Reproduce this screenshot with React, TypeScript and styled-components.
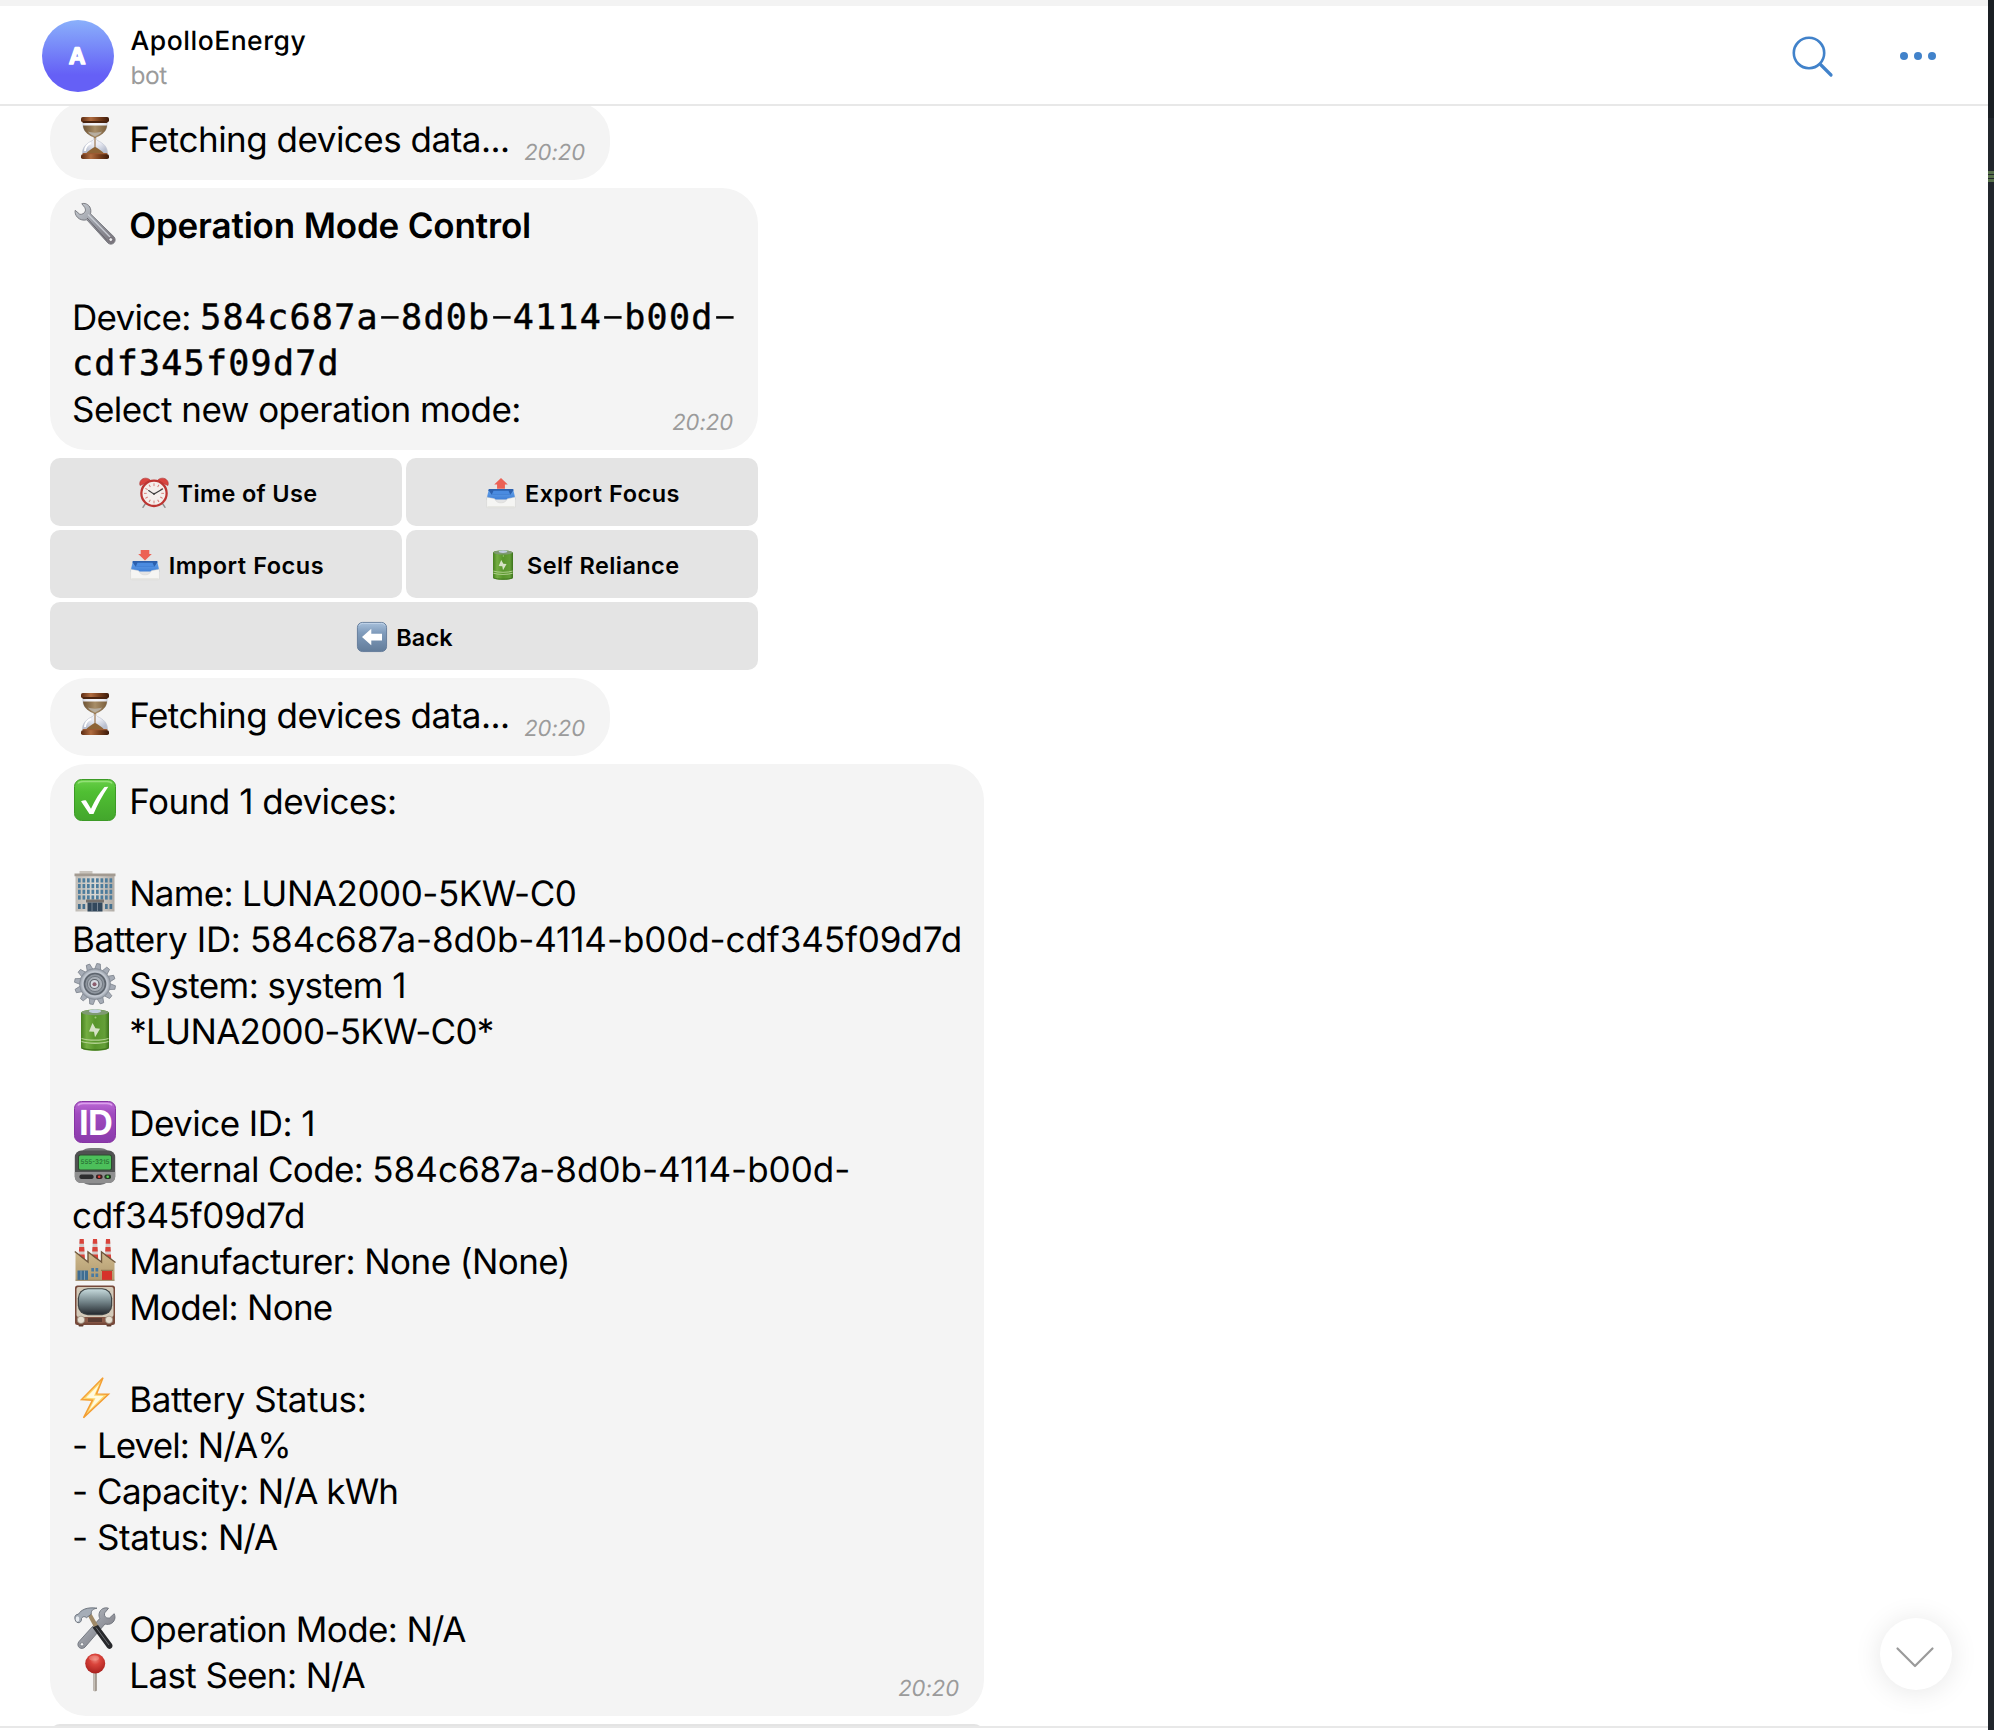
import React from "react";
import styled, { createGlobalStyle } from "styled-components";

const GlobalStyle = createGlobalStyle`
  *, *::before, *::after { box-sizing: border-box; }
  html, body { margin: 0; height: 100%; background: #ffffff; overflow: hidden; }
  body {
    font-family: Inter, "Noto Sans", "Liberation Sans", sans-serif;
    color: #000000;
    text-rendering: geometricPrecision;
    -webkit-font-smoothing: antialiased;
  }
`;

/* ---------- window ---------- */

const Window = styled.div`
  display: flex;
  width: 1994px;
  height: 1730px;
`;

const Pane = styled.div`
  flex: 1;
  min-width: 0;
  display: flex;
  flex-direction: column;
  border-top: 6px solid #f3f3f3;
  position: relative;
`;

const EditorEdge = styled.aside`
  width: 6px;
  display: flex;
  flex-direction: column;
  background: #21262c;
`;

const EditorTab = styled.div`
  height: 118px;
  margin-bottom: 53px;
  background: #1a1f24;
`;

const CodeMark = styled.div`
  height: 3px;
  margin-bottom: 1px;
  background: #56704a;
`;

/* ---------- header ---------- */

const Header = styled.header`
  height: 100px;
  padding: 14px 52px 0 42px;
  border-bottom: 2px solid #e8e8e8;
  display: flex;
  align-items: flex-start;
`;

const Avatar = styled.div`
  width: 72px;
  height: 72px;
  border-radius: 50%;
  background: linear-gradient(180deg, #8ab0fb 0%, #6560f6 76%, #6560f6 100%);
  overflow: hidden;
`;

const Peer = styled.div`
  flex: 1;
  padding: 5px 0 0 16.5px;
`;

const PeerName = styled.div`
  font-size: 26.5px;
  font-weight: 500;
  line-height: 33px;
  letter-spacing: 0.52px;
`;

const PeerStatus = styled.div`
  font-size: 24.5px;
  line-height: 34px;
  letter-spacing: -0.5px;
  color: #9b9b9b;
`;

const HeaderActions = styled.div`
  display: flex;
  align-items: center;
  height: 72px;
  gap: 66px;
`;

/* ---------- messages ---------- */

const Feed = styled.main`
  height: 1620px;
  padding-left: 50px;
  display: flex;
  flex-direction: column;
  align-items: flex-start;
  gap: 8px;
  overflow: hidden;
`;

const Bubble = styled.section<{ $width: number; $clipped?: boolean }>`
  flex: none;
  width: ${(p) => p.$width}px;
  margin-top: ${(p) => (p.$clipped ? -4 : 0)}px;
  padding: 16px 25px 16px 22px;
  border-radius: 36px;
  background: #f4f4f4;
`;

const Line = styled.div`
  display: flex;
  align-items: flex-start;
  height: 46px;
  white-space: pre;
`;

const Glyph = styled.span`
  flex: none;
  width: 57.2px;
  height: 42px;
  margin-top: -1px;
  padding-left: 2px;
`;

const Copy = styled.span<{ $track?: number; $bold?: boolean }>`
  font-size: 35px;
  line-height: 44px;
  font-weight: ${(p) => (p.$bold ? 600 : 400)};
  letter-spacing: ${(p) => p.$track ?? -0.5}px;
`;

const Code = styled.code<{ $indent: number }>`
  margin-left: ${(p) => p.$indent}px;
  font-family: "DejaVu Sans Mono", "Liberation Mono", monospace;
  font-size: 35px;
  line-height: 44px;
  letter-spacing: 1.25px;
  -webkit-text-stroke: 0.5px #000000;
`;

/* One monospace cell holding a hyphen stretched to nearly the cell's width. */
const Dash = styled.span`
  display: inline-flex;
  justify-content: center;
  width: 22.3px;
  font-family: Roboto, sans-serif;
  line-height: 30px;
  letter-spacing: 0;
  -webkit-text-stroke: 0;
`;

const DashInk = styled.span`
  transform: translateY(-1px) scaleX(2.1);
`;

const Time = styled.time`
  margin: 24px 0 0 auto;
  font-size: 22px;
  line-height: 22px;
  font-style: italic;
  letter-spacing: -0.02px;
  color: #9b9b9b;
`;

/* ---------- inline keyboard ---------- */

const Keyboard = styled.div`
  flex: none;
  width: 708px;
  display: grid;
  grid-template-columns: 1fr 1fr;
  gap: 4px;
`;

const Key = styled.button<{ $wide?: boolean; $track: number; $lead?: number }>`
  grid-column: ${(p) => (p.$wide ? "1 / -1" : "auto")};
  height: 68px;
  padding: 2px 0 0 ${(p) => p.$lead ?? 2}px;
  border: 0;
  border-radius: 10px;
  background: #e4e4e4;
  display: flex;
  align-items: center;
  justify-content: center;
  gap: 9px;
  font-family: inherit;
  font-size: 23.5px;
  font-weight: 600;
  line-height: 30px;
  letter-spacing: ${(p) => p.$track}px;
  color: #000000;
`;

const KeyLabel = styled.span`
  padding-top: 2px;
`;

const NextKey = styled.div`
  flex: none;
  width: 934px;
  height: 68px;
  border-radius: 10px;
  background: #e4e4e4;
`;

const Footer = styled.footer`
  height: 4px;
  border-top: 2px solid #e8e8e8;
  background: #ffffff;
`;

const JumpDown = styled.button`
  position: absolute;
  right: 36px;
  bottom: 40px;
  width: 72px;
  height: 72px;
  padding: 0;
  border: 0;
  border-radius: 50%;
  background: #ffffff;
  box-shadow: 0 2px 28px rgba(0, 0, 0, 0.1);
`;

/* ---------- emoji drawings ---------- */

type EmojiProps = { size?: number };

const EmojiSvg = styled.svg`
  display: block;
  overflow: visible;
`;

const DefsSvg = styled.svg`
  position: absolute;
`;

const Emoji = ({ size = 42, children }: EmojiProps & { children: React.ReactNode }) => (
  <EmojiSvg width={size} height={size} viewBox="0 0 42 42">
    {children}
  </EmojiSvg>
);

const Defs = () => (
  <DefsSvg width="0" height="0">
    <defs>
      <linearGradient id="wood" x1="0" x2="1">
        <stop offset="0" stopColor="#5b2b12" />
        <stop offset=".35" stopColor="#b06c40" />
        <stop offset=".65" stopColor="#7a401d" />
        <stop offset="1" stopColor="#3c1a0a" />
      </linearGradient>
      <linearGradient id="sand" x1="0" x2="1">
        <stop offset="0" stopColor="#6e5334" />
        <stop offset=".5" stopColor="#a88e68" />
        <stop offset="1" stopColor="#7b5f3d" />
      </linearGradient>
      <radialGradient id="glass" cx=".5" cy=".3" r=".7">
        <stop offset="0" stopColor="#ffffff" />
        <stop offset=".6" stopColor="#e9ebf3" />
        <stop offset="1" stopColor="#b9bfcf" />
      </radialGradient>
      <linearGradient id="steel" x1="0" y1="0" x2="1" y2="1">
        <stop offset="0" stopColor="#c9ced4" />
        <stop offset=".5" stopColor="#9598a0" />
        <stop offset="1" stopColor="#777178" />
      </linearGradient>
      <linearGradient id="green" x1="0" y1="0" x2="0" y2="1">
        <stop offset="0" stopColor="#68cf48" />
        <stop offset=".3" stopColor="#50bf33" />
        <stop offset="1" stopColor="#43a62c" />
      </linearGradient>
      <linearGradient id="purple" x1="0" y1="0" x2="0" y2="1">
        <stop offset="0" stopColor="#bd6bd6" />
        <stop offset=".3" stopColor="#a04abf" />
        <stop offset="1" stopColor="#8a3aab" />
      </linearGradient>
      <linearGradient id="slate" x1="0" y1="0" x2="0" y2="1">
        <stop offset="0" stopColor="#a9c1dc" />
        <stop offset=".35" stopColor="#809cbc" />
        <stop offset="1" stopColor="#627c9a" />
      </linearGradient>
      <linearGradient id="cell" x1="0" x2="1">
        <stop offset="0" stopColor="#47801f" />
        <stop offset=".2" stopColor="#74ae42" />
        <stop offset=".5" stopColor="#58952b" />
        <stop offset=".85" stopColor="#649f38" />
        <stop offset="1" stopColor="#3b721b" />
      </linearGradient>
      <linearGradient id="wall" x1="0" x2="1">
        <stop offset="0" stopColor="#c0bcb6" />
        <stop offset=".5" stopColor="#dcd9d4" />
        <stop offset="1" stopColor="#b0aba5" />
      </linearGradient>
      <radialGradient id="gear" cx=".5" cy=".5" r=".5">
        <stop offset="0" stopColor="#8b9198" />
        <stop offset=".55" stopColor="#a2a9b2" />
        <stop offset=".8" stopColor="#c3c9d2" />
        <stop offset="1" stopColor="#8d949e" />
      </radialGradient>
      <linearGradient id="screen" x1="0" y1="0" x2="0" y2="1">
        <stop offset="0" stopColor="#c4d8da" />
        <stop offset=".5" stopColor="#74858a" />
        <stop offset="1" stopColor="#262c31" />
      </linearGradient>
      <linearGradient id="bolt" x1="0" y1="0" x2="1" y2="1">
        <stop offset="0" stopColor="#f6a93b" />
        <stop offset="1" stopColor="#f0932b" />
      </linearGradient>
      <radialGradient id="ball" cx=".5" cy=".3" r=".65">
        <stop offset="0" stopColor="#f0867a" />
        <stop offset=".4" stopColor="#d9433b" />
        <stop offset="1" stopColor="#ad2421" />
      </radialGradient>
      <linearGradient id="trayIn" x1="0" y1="0" x2="0" y2="1">
        <stop offset="0" stopColor="#6aa8ef" />
        <stop offset="1" stopColor="#3f7fd6" />
      </linearGradient>
      <linearGradient id="brick" x1="0" y1="0" x2="0" y2="1">
        <stop offset="0" stopColor="#ceb88b" />
        <stop offset="1" stopColor="#b09a70" />
      </linearGradient>
    </defs>
  </DefsSvg>
);

const Hourglass = () => (
  <Emoji>
    <path d="M9 5h24c1 8-4 12-9.500 14.500c-1.500.8-1.500 3.200 0 4C29 26 34 30 33.500 37h-25C8 30 13 26 18.500 23.500c1.500-.8 1.500-3.200 0-4C13 17 8 13 9 5z" fill="url(#glass)" stroke="#c3c7d2" strokeWidth=".7" />
    <path d="M9 8.500h24c-.3 5.500-4.500 9-9.500 11.300c-1 .4-1.800 1.200-2.500 1.700c-.7-.5-1.500-1.300-2.500-1.700C13.500 17.500 9.300 14 9 8.500z" fill="url(#sand)" />
    <path d="M14 14.500c4 1.500 10 1.500 14 0c-1 2.500-4.500 3.800-7 5c-2.500-1.200-6-2.500-7-5z" fill="#bdb8b0" opacity=".8" />
    <path d="M20.500 20h1v10c3 2 7 4 9 7h-19c2-3 6-5 9-7z" fill="#8d6335" />
    <path d="M11 34c0-4 3-7 6-8" fill="none" stroke="#ffffff" strokeWidth="2" />
    <rect x="7" y="0" width="28" height="5.300" rx="1.800" fill="url(#wood)" />
    <rect x="8.500" y="4" width="25" height="2" rx="1" fill="#4a2410" />
    <rect x="8.500" y="36" width="25" height="2" rx="1" fill="#9b5a32" />
    <rect x="7" y="37.300" width="28" height="4.700" rx="1.800" fill="url(#wood)" />
  </Emoji>
);

const Wrench = () => (
  <Emoji>
    <path
      d="M7.800.7C10.500-.2 14 1 15.800 4c1.300 2.300 1.200 4.600.7 6.800L40 33.800c1.500 1.700 1.600 4.300 0 6c-1.600 1.700-4.200 1.800-6 .3L12.800 16.800C9.500 17.600 6 17 3.500 14.400C1.500 12.300.7 9.700 1.200 7.300l4.600 4c1.900.4 4.800-.8 5.600-3.400c.3-1.200-.1-2.500-.6-3.300z"
      fill="url(#steel)" stroke="#74757c" strokeWidth=".9" strokeLinejoin="round"
    />
    <path d="M14 11.500L36 34" stroke="#c9ccd3" strokeWidth="1.300" fill="none" />
    <path d="M13 15L33 37.500" stroke="#67646c" strokeWidth="1" fill="none" />
    <circle cx="36.800" cy="36.600" r="1.900" fill="#ededee" stroke="#66606a" strokeWidth=".8" />
  </Emoji>
);

const AlarmClock = ({ size }: EmojiProps) => (
  <Emoji size={size}>
    <path d="M9 36l-3.500 5M33 36l3.500 5" stroke="#8c8c8c" strokeWidth="2" strokeLinecap="round" />
    <path d="M1.500 10.500C-.5 5 4 .2 9 .2c3.500 0 6 1.300 7.500 3.800z" fill="#d9443f" stroke="#a92b2a" strokeWidth=".8" />
    <path d="M40.500 10.500C42.500 5 38 .2 33 .2c-3.500 0-6 1.300-7.500 3.800z" fill="#d9443f" stroke="#a92b2a" strokeWidth=".8" />
    <circle cx="21" cy="21.500" r="17.700" fill="#f4efec" stroke="#bd3532" strokeWidth="3.200" />
    <g stroke="#d77873" strokeWidth="1.300">
      {Array.from({ length: 12 }, (_, i) => (
        <path key={i} d="M21 7.500v3.800" transform={`rotate(${i * 30} 21 21.500)`} />
      ))}
    </g>
    <path d="M13.500 17.500L21 22.500L33 15.500" fill="none" stroke="#3b3b3b" strokeWidth="1.500" strokeLinecap="round" />
    <circle cx="21" cy="22" r="1.400" fill="#3b3b3b" />
  </Emoji>
);

const Tray = ({ size, down }: EmojiProps & { down?: boolean }) => (
  <Emoji size={size}>
    <path d={down ? "M15 0h12v5.500h3.500L21 14.800L11.500 5.500H15z" : "M21 0l9.500 9h-4v6h-11V9h-4z"} fill="#ec6154" />
    <path d="M4 15.300h34l3.300 14.700H.7z" fill="url(#trayIn)" />
    <path d="M4 15.300h34l.5 1.700l-4.500 6.500h-26L3.500 17z" fill="#2c60ad" />
    <path d="M8 23.500L10.500 18h21l2.500 5.500z" fill="#4a8be0" />
    <path d="M.8 26.500c4 1.500 8 1.500 11.200 2.500c2 4.500 5.500 5.800 9 5.800s7-1.300 9-5.800c3.200-1 7.200-1 11.200-2.500v14c0 .7-.4 1-1 1H1.800c-.6 0-1-.3-1-1z" fill="#f5f5f3" stroke="#d0d0cf" strokeWidth=".7" />
    <path d="M2 40h38" stroke="#deded9" strokeWidth="1" />
  </Emoji>
);

const Battery = ({ size }: EmojiProps) => (
  <Emoji size={size}>
    <path d="M7 4c0-2 6.300-3.500 14-3.500S35 2 35 4v34.500c0 2-6.300 3.300-14 3.300S7 40.500 7 38.500z" fill="url(#cell)" />
    <ellipse cx="21" cy="3.500" rx="13.300" ry="2.800" fill="#7f9a72" />
    <ellipse cx="21" cy="2.200" rx="6" ry="1.900" fill="#c3cee2" />
    <path d="M18.500 14l-3.500 8.500l5 .2l1 5.500l5-8.500l-4.500-.5z" fill="#d6e2c6" />
    <circle cx="21.500" cy="8.500" r="1" fill="#9dc67a" />
    <path d="M7.500 29.500c7 2.300 20 2.300 27 0M7.500 32.500c7 2.300 20 2.300 27 0" fill="none" stroke="#b4d292" strokeWidth="1.300" />
    <path d="M7.500 39c6 2.500 21 2.500 27 0" fill="none" stroke="#3f751d" strokeWidth="1.300" />
  </Emoji>
);

const BackArrow = ({ size }: EmojiProps) => (
  <Emoji size={size}>
    <rect x=".6" y=".6" width="40.800" height="40.800" rx="7" fill="url(#slate)" stroke="#5c7696" strokeWidth="1.200" />
    <path d="M3 5c1-2.500 3-3 6-3h24c3 0 5 .5 6 3" fill="none" stroke="#c5d6ea" strokeWidth="1.200" />
    <path d="M7 21L20 9.500v7h15v9.500H20v6.500z" fill="#ffffff" />
  </Emoji>
);

const Check = () => (
  <Emoji>
    <rect x=".5" y=".5" width="41" height="41" rx="7" fill="url(#green)" stroke="#3c9a26" />
    <path d="M4 4.500C5 2.700 7 2.500 9 2.500h24c2 0 4 .2 5 2" fill="none" stroke="#93e077" strokeWidth="1.400" />
    <path d="M7 22.300c2-.8 3.800-1.300 5-.8l5 8.300c4-8.800 8.500-15.800 13.500-21.800l3.800-.2C28.500 16.500 23.500 25.500 19.500 35h-4z" fill="#ffffff" />
  </Emoji>
);

const Building = () => (
  <Emoji>
    <rect x="5.500" y="0" width="13" height="4" fill="#c9c4bd" />
    <rect x="1.500" y="4" width="39" height="36.500" fill="url(#wall)" />
    <path d="M.5 2.500h41v2.700h-41z" fill="#a39b92" />
    {[7.3, 13, 18.7, 24.4].map((y) =>
      Array.from({ length: 8 }, (_, i) => (
        <rect key={`${y}-${i}`} x={4 + i * 4.5} y={y} width="2.700" height="4.200" fill="#4d7c9c" />
      ))
    )}
    {[4, 8.5, 31, 35.5].map((x) => (
      <rect key={x} x={x} y="33" width="2.700" height="5" fill="#446f8e" />
    ))}
    <path d="M12 28.500h18v3H12z" fill="#77726e" />
    <path d="M13.500 31.500h15v9h-15z" fill="#32485c" />
    <path d="M18 31.500v9M23.500 31.500v9" stroke="#8b98a3" strokeWidth=".8" />
  </Emoji>
);

const Gear = () => (
  <Emoji>
    {Array.from({ length: 12 }, (_, i) => (
      <path key={i} d="M18 7l1.200-6.500h3.600L24.200 7z" fill="#a6acb6" stroke="#757c86" strokeWidth=".7" transform={`rotate(${i * 30 + 10} 21 21)`} />
    ))}
    <circle cx="21" cy="21" r="15.500" fill="url(#gear)" stroke="#858c96" strokeWidth=".7" />
    <circle cx="21" cy="21" r="10.500" fill="#8f969f" stroke="#5d646d" strokeWidth="1.600" />
    <circle cx="21" cy="21" r="7.600" fill="#a9afb7" stroke="#737a83" strokeWidth="1" />
    <circle cx="20.500" cy="21" r="4.500" fill="#d7dbe2" stroke="#5b6169" strokeWidth="1.200" />
    <circle cx="20.500" cy="21.200" r="2" fill="#8b5d6d" />
  </Emoji>
);

const IdBadge = () => (
  <Emoji>
    <rect x=".5" y=".5" width="41" height="41" rx="7" fill="url(#purple)" stroke="#8734a4" />
    <path d="M4 4.500C5 2.700 7 2.500 9 2.500h24c2 0 4 .2 5 2" fill="none" stroke="#dba0ec" strokeWidth="1.400" />
    <text x="21.600" y="34" textAnchor="middle" fontFamily="Inter, sans-serif" fontWeight="700" fontSize="34.500" letterSpacing="-0.6" fill="#ffffff">ID</text>
  </Emoji>
);

const Pager = () => (
  <Emoji>
    <path d="M8 4c2-2 5-3 9-3h8c4 0 7 1 9 3l-2 32c-2 1.500-5 2-8 2h-6c-3 0-6-.5-8-2z" fill="#77787a" />
    <rect x=".8" y="3.500" width="40.400" height="32.500" rx="6.500" fill="#505152" />
    <path d="M.8 25h40.400v4.500c0 4-2.500 6.500-6.500 6.500H7.300c-4 0-6.500-2.500-6.500-6.500z" fill="#8f8f90" />
    <rect x="4" y="7.500" width="34" height="16" rx="2.500" fill="#2f4a30" />
    <rect x="5" y="8.500" width="32" height="14" rx="1.500" fill="#4cc05a" />
    <text x="21" y="17" textAnchor="middle" fontFamily="Inter, sans-serif" fontWeight="500" fontSize="6.300" fill="#246b30">555-3215</text>
    <rect x="5.500" y="27.500" width="14" height="4.500" rx="1.800" fill="#2d2d2e" />
    <rect x="22" y="27.500" width="6.500" height="4.500" rx="1.800" fill="#3a2222" />
    <rect x="30.500" y="27.500" width="6.500" height="4.500" rx="1.800" fill="#233a23" />
    <circle cx="25.200" cy="29.700" r="1.300" fill="#e5433b" />
    <circle cx="33.700" cy="29.700" r="1.300" fill="#5cd15b" />
  </Emoji>
);

const Factory = () => (
  <Emoji>
    {[7.7, 21, 34].map((x) => (
      <g key={x}>
        <path d={`M${x - 2} 0h4l1.300 22h-6.600z`} fill="#d3cac8" />
        <path d={`M${x - 2} 0h4l.3 4.800h-4.600zM${x - 2.5} 8h5l.3 4.500h-5.600zM${x - 2.9} 15.500h5.800l.3 5h-6.400z`} fill="#d9433a" />
      </g>
    ))}
    <path d="M1.500 13.500l12.500 10V13.500l13 10V13.500l13.500 9.500v18.500h-39z" fill="url(#brick)" />
    <path d="M.8 12.500L14 23V13L27.500 23V13L41.500 23.500" fill="none" stroke="#6f573b" strokeWidth="1.400" />
    <path d="M3.500 31.500h10.500v9.500H3.500z" fill="#3f6d92" />
    <path d="M7 31.500v9.500M10.500 31.500v9.500" stroke="#9fb3c0" strokeWidth=".7" />
    <path d="M17.300 29h2.700v3.500h-2.700zM21.500 29h2.700v3.500h-2.700zM17.300 34.500h2.700v3.500h-2.700zM21.500 34.500h2.700v3.500h-2.700z" fill="#497ba3" />
    <path d="M28 32h10v9H28z" fill="#d6332b" />
    <path d="M27 31.300h12" stroke="#8c6f4b" strokeWidth="1" />
    <path d="M1.500 41.300h39" stroke="#8b7650" strokeWidth=".8" />
  </Emoji>
);

const Television = () => (
  <Emoji>
    <rect x="4.500" y="37" width="5" height="4.500" rx="1" fill="#5b3a2d" />
    <rect x="32.500" y="37" width="5" height="4.500" rx="1" fill="#5b3a2d" />
    <rect x="1" y=".5" width="40" height="39.500" rx="2.500" fill="#76493a" />
    <rect x="2.500" y="2" width="37" height="30" rx="2" fill="#d3cab9" />
    <rect x="3.800" y="3.200" width="34.400" height="27" rx="10" fill="#3d4446" />
    <rect x="5" y="4.300" width="32" height="24.800" rx="9" fill="url(#screen)" />
    <path d="M2.800 32.200h36.400v5.600H2.800z" fill="#8a5a48" />
    <path d="M14 33h14v4H14z" fill="#5a3c32" />
    <circle cx="7" cy="34.800" r="3.700" fill="#e6ded0" stroke="#8e8273" strokeWidth=".7" />
    <circle cx="35" cy="34.800" r="3.700" fill="#e6ded0" stroke="#8e8273" strokeWidth=".7" />
  </Emoji>
);

const Bolt = () => (
  <Emoji>
    <path d="M29 .8L7.500 22.500l11 .7L9.500 40.800L34.500 17.300l-12-.4z" fill="#fcd873" stroke="url(#bolt)" strokeWidth="1.500" strokeLinejoin="miter" />
    <path d="M25 7.500L12 20.800l9.500.5L15 33.500L29.500 19l-9.500-.3z" fill="#fffbe0" />
  </Emoji>
);

const HammerWrench = () => (
  <Emoji>
    <path d="M34.500 1.300c-4-1.500-8.300.8-9.300 5c-.5 2 0 3.800.5 5.300L5 34.500c-1.700 2-1.300 4.700.2 6s4.300 1.300 5.900-.5L31 17c5 1.500 9.700-1.500 10-6.500c0-1.500-.3-2.800-.8-3.800l-4.700 4.300c-2 .5-4.500-.5-5-2.800c-.2-1 0-2 .5-2.700z" fill="url(#steel)" stroke="#6d727b" strokeWidth=".9" />
    <circle cx="8" cy="37.300" r="1.700" fill="#f3f3f3" stroke="#6d727b" strokeWidth=".7" />
    <path d="M14 9l3.300-2.500L24.500 19l-3.500 3z" fill="#a08a68" />
    <path d="M18.500 20.500l5.500-2.500l14 19c1 1.500.6 3.300-.8 4.300s-3.200.7-4.200-.8z" fill="#27282b" />
    <path d="M22 20.500l13 17.500" stroke="#6b6d72" strokeWidth="1" />
    <path d="M.8 10.500c0-1.800 1.500-3.300 3.500-3.200C7 3 12.500-.3 23 1.200c-4 .8-6 2-5.800 6l-4.700 3.500c-2-1.500-3.500-1.500-5 .8c.3 2.800-1.500 4.500-3.500 4.200C2 15.500.8 13 .8 10.500z" fill="#a5adb7" stroke="#676d77" strokeWidth=".9" />
    <ellipse cx="3.500" cy="12" rx="1.800" ry="2.800" fill="#e6eaef" />
  </Emoji>
);

const Pin = () => (
  <Emoji>
    <path d="M19.300 19h3.600v18.500c0 1-3.600 1-3.600 0z" fill="#a29990" />
    <path d="M20.300 20v18" stroke="#cfc8c0" strokeWidth="1" />
    <circle cx="21.200" cy="10.500" r="10" fill="url(#ball)" />
    <ellipse cx="20" cy="5" rx="5" ry="2.600" fill="#f7aaa0" opacity=".4" />
  </Emoji>
);

/* ---------- header drawings ---------- */

const SearchIcon = () => (
  <svg width="44" height="44" viewBox="0 0 44 44" fill="none" stroke="#4182ca" strokeLinecap="round">
    <circle cx="19" cy="19" r="15.200" strokeWidth="2.600" />
    <path d="M30.500 30.500L41 41" strokeWidth="3.200" />
  </svg>
);

const MoreIcon = () => (
  <svg width="36" height="8" viewBox="0 0 36 8" fill="#4182ca">
    <circle cx="4" cy="4" r="4" />
    <circle cx="18" cy="4" r="4" />
    <circle cx="32" cy="4" r="4" />
  </svg>
);

const Monogram = () => (
  <svg width="72" height="72" viewBox="0 0 72 72">
    <text x="35.300" y="44.400" textAnchor="middle" fontFamily="Inter, sans-serif" fontWeight="600" fontSize="22.500" fill="#ffffff" stroke="#ffffff" strokeWidth="1.700" strokeLinejoin="round">A</text>
  </svg>
);

const ChevronDown = () => (
  <svg width="72" height="72" viewBox="0 0 72 72" fill="none" stroke="#9a9a9a" strokeWidth="2.200" strokeLinecap="round" strokeLinejoin="round">
    <path d="M17.500 30.500L35 48L52.500 30.500" />
  </svg>
);

/* ---------- content ---------- */

type Run = [text: string, track: number];
type Entry = { icon?: React.ComponentType; runs?: Run[] };

const deviceReport: Entry[] = [
  { icon: Check, runs: [["Found 1 devices:", -0.49]] },
  {},
  { icon: Building, runs: [["Name: ", -0.7], ["LUNA2000-5KW-C0", -0.46]] },
  { runs: [["Battery ID: ", -0.38], ["584c687a-8d0b-4114-b00d-cdf345f09d7d", -0.09]] },
  { icon: Gear, runs: [["System: system 1", -0.55]] },
  { icon: Battery, runs: [["*LUNA2000-5KW-C0*", -0.7]] },
  {},
  { icon: IdBadge, runs: [["Device ID: 1", -0.53]] },
  { icon: Pager, runs: [["External Code: ", -0.66], ["584c687a-8d0b-4114-b00d-", 0.01]] },
  { runs: [["cdf345f09d7d", -0.37]] },
  { icon: Factory, runs: [["Manufacturer: None (None)", -0.56]] },
  { icon: Television, runs: [["Model: None", -0.72]] },
  {},
  { icon: Bolt, runs: [["Battery Status:", -0.34]] },
  { runs: [["- ", -0.5], ["Level: N/A%", -0.92]] },
  { runs: [["- ", -0.5], ["Capacity: ", -0.6], ["N/A kWh", -0.9]] },
  { runs: [["- ", -0.5], ["Status: ", -0.4], ["N/A", -1.1]] },
  {},
  { icon: HammerWrench, runs: [["Operation Mode: ", -0.62], ["N/A", -1.2]] },
  { icon: Pin, runs: [["Last Seen: ", -0.6], ["N/A", -1.2]] },
];

const DeviceCode = ({ value, indent }: { value: string; indent: number }) => (
  <Code $indent={indent}>
    {value.split(/(-)/).map((part, i) =>
      part === "-" ? <Dash key={i}><DashInk>-</DashInk></Dash> : part
    )}
  </Code>
);

const Fetching = ({ clipped }: { clipped?: boolean }) => (
  <Bubble $width={560} $clipped={clipped}>
    <Line>
      <Glyph><Hourglass /></Glyph>
      <Copy $track={-0.505}>Fetching devices data...</Copy>
      <Time>20:20</Time>
    </Line>
  </Bubble>
);

export default function App() {
  return (
    <>
      <GlobalStyle />
      <Defs />
      <Window>
        <Pane>
          <Header>
            <Avatar><Monogram /></Avatar>
            <Peer>
              <PeerName>ApolloEnergy</PeerName>
              <PeerStatus>bot</PeerStatus>
            </Peer>
            <HeaderActions>
              <SearchIcon />
              <MoreIcon />
            </HeaderActions>
          </Header>

          <Feed>
            <Fetching clipped />

            <Bubble $width={708}>
              <Line>
                <Glyph><Wrench /></Glyph>
                <Copy $bold $track={-0.17}>Operation Mode Control</Copy>
              </Line>
              <Line />
              <Line>
                <Copy $track={-0.7}>Device:</Copy>
                <DeviceCode indent={9.5} value="584c687a-8d0b-4114-b00d-" />
              </Line>
              <Line>
                <DeviceCode indent={0} value="cdf345f09d7d" />
              </Line>
              <Line>
                <Copy $track={-0.53}>Select new operation mode:</Copy>
                <Time>20:20</Time>
              </Line>
            </Bubble>

            <Keyboard>
              <Key $track={0.35} $lead={4}><AlarmClock size={30} /><KeyLabel>Time of Use</KeyLabel></Key>
              <Key $track={0.5}><Tray size={30} /><KeyLabel>Export Focus</KeyLabel></Key>
              <Key $track={0.54}><Tray size={30} down /><KeyLabel>Import Focus</KeyLabel></Key>
              <Key $track={0.42} $lead={3.5}><Battery size={30} /><KeyLabel>Self Reliance</KeyLabel></Key>
              <Key $wide $track={0.1}><BackArrow size={30} /><KeyLabel>Back</KeyLabel></Key>
            </Keyboard>

            <Fetching />

            <Bubble $width={934}>
              {deviceReport.map(({ icon: Icon, runs = [] }, i) => (
                <Line key={i}>
                  {Icon && <Glyph><Icon /></Glyph>}
                  {runs.map(([text, track]) => (
                    <Copy key={text} $track={track}>{text}</Copy>
                  ))}
                  {i === deviceReport.length - 1 && <Time>20:20</Time>}
                </Line>
              ))}
            </Bubble>

            <NextKey />
          </Feed>
          <Footer />

          <JumpDown><ChevronDown /></JumpDown>
        </Pane>
        <EditorEdge>
          <EditorTab />
          <CodeMark />
          <CodeMark />
          <CodeMark />
        </EditorEdge>
      </Window>
    </>
  );
}
